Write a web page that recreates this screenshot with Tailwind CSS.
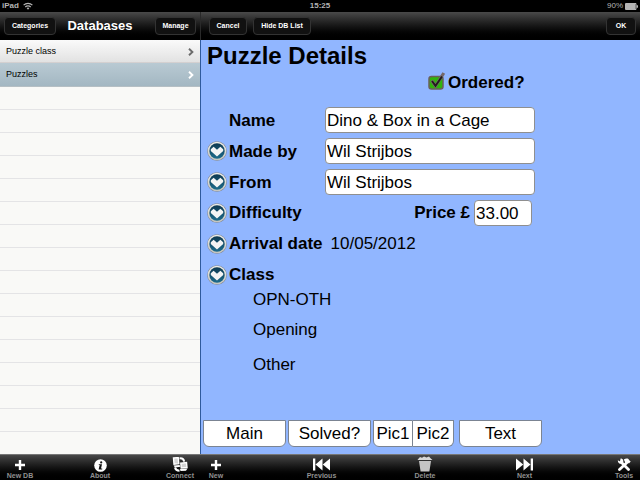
<!DOCTYPE html>
<html lang="en">
<head>
  <meta charset="UTF-8" />
  <meta name="viewport" content="width=device-width, initial-scale=1.0" />
  <title>Puzzle Details</title>
  <script src="https://cdn.jsdelivr.net/npm/@tailwindcss/browser@4"></script>
</head>
<body class="bg-black text-black min-h-screen flex flex-col font-['Liberation_Sans',Arial,sans-serif]">

  <!-- Shared icons -->
  <svg class="absolute w-0 h-0" aria-hidden="true">
    <defs>
      <linearGradient id="ring" x1="0" y1="0" x2="0" y2="1">
        <stop offset="0" stop-color="#eeeeea" />
        <stop offset="1" stop-color="#c4c4be" />
      </linearGradient>
      <linearGradient id="disc" x1="0" y1="0" x2="0" y2="1">
        <stop offset="0" stop-color="#0f3a52" />
        <stop offset="1" stop-color="#1d6c8c" />
      </linearGradient>
    </defs>
    <symbol id="drop" viewBox="0 0 20 20">
      <circle cx="10" cy="10" r="9.8" fill="#7d8694" />
      <circle cx="10" cy="10" r="9.3" fill="url(#ring)" />
      <circle cx="10" cy="10" r="7.7" fill="url(#disc)" />
      <path d="M3.8 8.2 6.6 5.8 10 8.8 13.4 5.8l2.8 2.4v1.8L10 15.4 3.8 10z" fill="#f4f4f4" />
    </symbol>
    <symbol id="plus" viewBox="0 0 10 10">
      <path d="M3.8 0h2.4v3.8H10v2.4H6.2V10H3.8V6.2H0V3.8h3.8z" fill="#fff" />
    </symbol>
    <symbol id="chevron" viewBox="0 0 6 8">
      <path d="M1 .8 4.4 4 1 7.2" fill="none" stroke="currentColor" stroke-width="1.9" />
    </symbol>
  </svg>

  <!-- Status bar -->
  <div class="grid grid-cols-3 items-center h-3 px-[2px] text-[8px] leading-3 font-bold text-[#b4b4b4]">
    <div class="flex items-center gap-1">
      <span>iPad</span>
      <svg class="w-[10px] h-2" viewBox="0 0 10 8" fill="none" stroke="#b4b4b4" stroke-width="1.2">
        <path d="M.6 3.2a6.2 6.2 0 0 1 8.8 0M2.3 5a3.8 3.8 0 0 1 5.4 0" />
        <path d="M3.6 6.1a2 2 0 0 1 2.8 0L5 7.7z" fill="#b4b4b4" stroke="none" />
      </svg>
    </div>
    <div class="text-center">15:25</div>
    <div class="flex items-center justify-end gap-[2px] font-normal">
      <span>90%</span>
      <svg class="w-[13px] h-[7px]" viewBox="0 0 13 7">
        <path d="M.5.5h10.5v6H.5z" fill="none" stroke="#b4b4b4" />
        <path d="M1 1h9.5v5H1zM11.5 2.2H13v2.6h-1.5z" fill="#b4b4b4" />
      </svg>
    </div>
  </div>

  <div class="flex flex-1">

    <!-- Databases list -->
    <aside class="flex flex-col w-[200px] shrink-0 bg-[#f9f9f7]">
      <header class="grid grid-cols-[1fr_auto_1fr] items-center h-7 px-1 bg-linear-to-b from-[#4a4a4a] via-[#161616] to-black text-white">
        <button class="h-[18px] w-[52px] rounded border border-[#333] bg-[#111] text-[7px] font-bold">Categories</button>
        <h1 class="text-[13px] leading-4 font-bold">Databases</h1>
        <button class="h-[18px] w-[41px] justify-self-end rounded border border-[#333] bg-[#111] text-[7px] font-bold">Manage</button>
      </header>
      <nav class="text-[9px]">
        <a href="#" class="flex items-center justify-between h-[23px] pt-px px-[6px] border-b border-[#d4d0d0] bg-linear-to-b from-[#fafafa] to-[#e2e2e2]">
          Puzzle class
          <svg class="w-[6px] h-2 text-[#6b6b6b]"><use href="#chevron" /></svg>
        </a>
        <a href="#" class="flex items-center justify-between h-6 pt-px px-[6px] border-b border-[#b5bfc4] bg-linear-to-b from-[#b9cad3] to-[#a3b7c2]">
          Puzzles
          <svg class="w-[6px] h-2 text-white"><use href="#chevron" /></svg>
        </a>
      </nav>
      <div class="flex-1 bg-[repeating-linear-gradient(to_bottom,#f9f9f7_0,#f9f9f7_22px,#e4e4e6_22px,#e4e4e6_23px)]"></div>
      <footer class="flex items-end justify-between h-[26px] px-2 border-t border-[#777] bg-linear-to-b from-[#484848] via-[#141414] to-black text-[7px] leading-[8px] font-bold text-[#909090]">
        <button class="flex flex-col items-center w-6 whitespace-nowrap">
          <svg class="w-[10px] h-[10px] mb-[2px]"><use href="#plus" /></svg>
          New DB
        </button>
        <button class="flex flex-col items-center w-6">
          <svg class="w-[13px] h-[13px]" viewBox="0 0 13 13">
            <circle cx="6.5" cy="6.5" r="6.3" fill="#fff" />
            <circle cx="7.2" cy="3.4" r="1.1" fill="#111" />
            <path d="M4.8 5.2H8L7 9.6h1.2v.9H4.6l1.1-4.4h-.9z" fill="#111" />
          </svg>
          About
        </button>
        <button class="flex flex-col items-center w-6">
          <svg class="w-4 h-[15px]" viewBox="0 0 16 15">
            <path d="M1.5 1 6.2.6 6.800 6.600 2 7.200zM8.800 6.200 14.500 5.500 15 10.500 9.200 11z" fill="#d4d4d4" stroke="#fff" stroke-width="1.400" />
            <path d="M1.500 8.600 7.500 8l1 1.800-5.500.7zM8 12l7.500-.5-1.500 2.200L8.500 14z" fill="#fff" />
            <path d="M7.500 1.400c2.800-.4 4.200.8 4.700 3.200M3 10.500c.5 2.200 2 3.200 4.500 3.200" fill="none" stroke="#fff" stroke-width="2" />
          </svg>
          Connect
        </button>
      </footer>
    </aside>

    <!-- Record details -->
    <main class="flex flex-col flex-1 bg-[#91b6ff]">
      <header class="flex items-center gap-[6px] h-7 pl-2 pr-1 border-l border-[#2a2a2a] bg-linear-to-b from-[#4a4a4a] via-[#161616] to-black text-white text-[7px] font-bold">
        <button class="h-[18px] w-[38px] rounded border border-[#333] bg-[#111]">Cancel</button>
        <button class="h-[18px] w-[58px] rounded border border-[#333] bg-[#111]">Hide DB List</button>
        <button class="h-[18px] w-[30px] ml-auto rounded border border-[#333] bg-[#111]">OK</button>
      </header>

      <form class="flex flex-col flex-1 border-l border-[#2f5a9c] pl-[6px] text-[17px]">
        <h2 class="text-2xl leading-8 font-bold">Puzzle Details</h2>

        <label class="flex items-center gap-[2px] h-[22px] pl-[221px] font-bold">
          <span class="relative w-[18px] h-[18px] mb-1">
            <input type="checkbox" checked class="absolute inset-0 opacity-0" />
            <svg class="w-[18px] h-[18px]" viewBox="0 0 18 18">
              <rect x="1" y="4.5" width="14" height="12.5" rx="2.5" fill="#2fb40c" stroke="#6a6058" stroke-width="1.5" />
              <path d="M3.5 8.5 7.5 14 15.8 1" fill="none" stroke="#75686a" stroke-width="3.2" />
              <path d="M4 9 7.5 13.8 14 4.5" fill="none" stroke="#221c1c" stroke-width="1.9" />
            </svg>
          </span>
          Ordered?
        </label>

        <div class="grid grid-cols-[22px_96px_210px] auto-rows-[26px] gap-y-[5px] items-center mt-[13px]">
          <label for="name" class="col-start-2 font-bold pt-px">Name</label>
          <input id="name" type="text" value="Dino &amp; Box in a Cage" class="h-[26px] w-full pl-px pt-px rounded-sm border border-[#8f8f8f] bg-white" />

          <button type="button" aria-label="Choose maker"><svg class="w-5 h-5"><use href="#drop" /></svg></button>
          <label for="maker" class="font-bold pt-px">Made by</label>
          <input id="maker" type="text" value="Wil Strijbos" class="h-[26px] w-full pl-px pt-px rounded-sm border border-[#8f8f8f] bg-white" />

          <button type="button" aria-label="Choose seller"><svg class="w-5 h-5"><use href="#drop" /></svg></button>
          <label for="seller" class="font-bold pt-px">From</label>
          <input id="seller" type="text" value="Wil Strijbos" class="h-[26px] w-full pl-px pt-px rounded-sm border border-[#8f8f8f] bg-white" />

          <button type="button" aria-label="Choose difficulty"><svg class="w-5 h-5"><use href="#drop" /></svg></button>
          <span class="font-bold">Difficulty</span>
          <div class="flex items-center justify-end gap-1 pr-[3px]">
            <label for="price" class="font-bold">Price £</label>
            <input id="price" type="text" value="33.00" class="h-[26px] w-[58px] pl-px pt-px rounded-sm border border-[#8f8f8f] bg-white" />
          </div>

          <button type="button" aria-label="Choose arrival date"><svg class="w-5 h-5"><use href="#drop" /></svg></button>
          <div class="flex gap-2 col-span-2"><span class="font-bold">Arrival date</span><span>10/05/2012</span></div>

          <button type="button" aria-label="Choose class"><svg class="w-5 h-5"><use href="#drop" /></svg></button>
          <span class="font-bold">Class</span>
        </div>

        <ul class="pl-[46px] leading-6">
          <li>OPN-OTH</li>
          <li class="mt-[6px]">Opening</li>
          <li class="mt-[11px]">Other</li>
        </ul>

        <div class="flex mt-auto -ml-[5px] mb-[7px] pl-px">
          <button type="button" class="h-[27px] w-[83px] mr-[2px] rounded-b-md border border-[#7b8492] bg-white">Main</button>
          <button type="button" class="h-[27px] w-[83px] mr-[2px] rounded-b-md border border-[#7b8492] bg-white">Solved?</button>
          <button type="button" class="h-[27px] w-10 rounded-bl-md border border-[#7b8492] bg-white">Pic1</button>
          <button type="button" class="h-[27px] w-[41px] mr-[5px] rounded-br-md border border-l-0 border-[#7b8492] bg-white">Pic2</button>
          <button type="button" class="h-[27px] w-[83px] rounded-b-md border border-[#7b8492] bg-white">Text</button>
        </div>
      </form>

      <footer class="flex items-end justify-between h-[26px] pl-[2px] pr-1 border-t border-[#777] bg-linear-to-b from-[#484848] via-[#141414] to-black text-[7px] leading-[8px] font-bold text-[#909090]">
        <button class="flex flex-col items-center w-7">
          <svg class="w-[10px] h-[10px] mb-[2px]"><use href="#plus" /></svg>
          New
        </button>
        <button class="flex flex-col items-center w-8">
          <svg class="w-[17px] h-[13px] mb-px" viewBox="0 0 17 13">
            <path d="M0 .5h2.3v12H0zM9.5.5v12l-7-6zM17 .5v12l-7.2-6z" fill="#fff" />
          </svg>
          Previous
        </button>
        <button class="flex flex-col items-center w-6">
          <svg class="w-4 h-4" viewBox="0 0 16 16">
            <path d="M1 3.2 3 1l2 .8L7 .6l2.500 1L12 .5l1.500 1.700L15.500 4H.5z" fill="#d8d8d8" />
            <path d="M2 5h12l-1.600 10.500H3.600z" fill="#c4c4c4" />
          </svg>
          Delete
        </button>
        <button class="flex flex-col items-center w-6">
          <svg class="w-[17px] h-[13px] mb-px" viewBox="0 0 17 13">
            <path d="M17 .5h-2.300v12H17zM7.500.5v12l7-6zM0 .5v12l7.200-6z" fill="#fff" />
          </svg>
          Next
        </button>
        <button class="flex flex-col items-center w-6">
          <svg class="w-[14px] h-[13px] mb-px" viewBox="0 0 14 13">
            <path d="M4 4 11.500 11.500M10 4.500 2.500 11.500" stroke="#fff" stroke-width="2.800" stroke-linecap="round" />
            <path d="M.8 2.200 3 3.400 3.600.6C6 .6 7 3 6 5 4.500 6.600.8 6 .8 2.200zM6.800 1.500C9 0 11.500.4 12 2l1.700 1.500L12 5.500l-1.500-1L9 6z" fill="#fff" />
          </svg>
          Tools
        </button>
      </footer>
    </main>
  </div>

</body>
</html>
